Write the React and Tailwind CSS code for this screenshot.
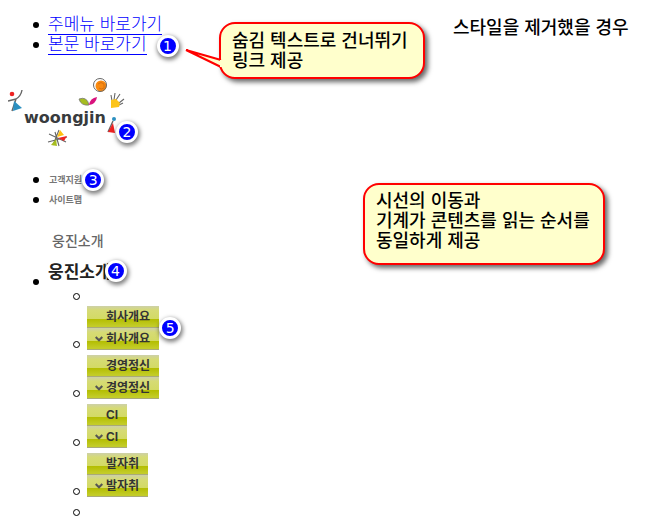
const KR = "font-['Liberation_Sans','Noto_Sans_CJK_KR',sans-serif]";

const menu = [
  { label: "회사개요", badge: "5" },
  { label: "경영정신" },
  { label: "CI" },
  { label: "발자취" },
];

function Badge({ children, className }) {
  return (
    <span
      className={`absolute flex size-[22px] items-center justify-center rounded-full border-[3px] border-white bg-[#0000ff] font-['DejaVu_Sans',sans-serif] text-sm leading-none font-normal text-white shadow-[1px_2px_4px_1px_rgba(0,0,0,0.5)] ${className}`}
    >
      {children}
    </span>
  );
}

function Disc() {
  return <span className="block size-[6px] shrink-0 rounded-full bg-black" />;
}

function Circle() {
  return <span className="block size-[7px] shrink-0 rounded-full border border-black" />;
}

function MenuLink({ label, open }) {
  return (
    <a
      href="#menu"
      className="flex h-[22px] items-center border-b border-[#a9aa78] bg-[linear-gradient(to_bottom,#cdd0a8_0,#d6db75_20%,#d3da65_61%,#b3bd00_62%,#c3cc28_95%)] pt-px pr-[9px] pl-[19px] text-xs font-bold text-[#333]"
    >
      {open && (
        <svg viewBox="0 0 8 6" className="-ml-[11px] mr-[3px] h-[6px] w-[8px]" aria-hidden="true">
          <path d="M.7 1 4 4.3 7.3 1" fill="none" stroke="#555" strokeWidth="2" />
        </svg>
      )}
      {label}
    </a>
  );
}

function Logo() {
  return (
    <svg viewBox="0 0 120 76" className="h-[76px] w-[120px]" role="img" aria-label="woongjin">
      <g fill="none" stroke="#666" strokeWidth="1.4">
        <path d="M0 26l8-2Q13 21 14 15M8 24L4 36" />
        <path d="M104 26l-1-6M106 25l1-7M108 25l4-6M111 28l5-4M111 30l4-2" strokeWidth="1.1" />
        <path d="M41 59l17 8M51 55L45 70M59 62L40 67M47 57l4 14" strokeWidth="1.1" />
        <path d="M105 46L100 57" />
      </g>
      <circle cx="4" cy="19" r="2.3" fill="#e22" />
      <path d="M6 26l8 7-9 3z" fill="#2b8fc0" />
      <path d="M49 62l3-7 4 5z" fill="#fdc010" />
      <path d="M50 63l9-2-3 5z" fill="#e22" />
      <path d="M48 64l-5 6 6 1z" fill="#a6bd20" />
      <path d="M103 25l5-1 4 4-1 4-8 1z" fill="#fcc419" />
      <circle cx="93" cy="11" r="5.5" fill="#f98a10" />
      <circle cx="92" cy="10" r="6.5" fill="none" stroke="#666" />
      <path d="M90 9q3-3 6 0v4q-3 2-5 0" fill="none" stroke="#d87010" />
      <path d="M71 24q8-3 10 6q-8 1-10-6z" fill="#a6bd20" stroke="#777" strokeWidth=".8" />
      <path d="M81 30q1-7 8-8q-1 7-8 8z" fill="#d9127d" />
      <circle cx="106" cy="44" r="2" fill="#2b8fc0" />
      <path d="M105 48l-5 9 7 1z" fill="#e22" />
      <text
        x="16"
        y="48"
        fill="#383b3d"
        className="font-['DejaVu_Sans',sans-serif] text-base font-bold"
      >
        woongjin
      </text>
    </svg>
  );
}

function Callout({ children, className }) {
  return (
    <div
      className={`relative rounded-2xl border-2 border-[#f00] bg-[#ffffcc] shadow-[3px_3px_5px_rgba(0,0,0,0.6)] ${className}`}
    >
      {children}
    </div>
  );
}

export default function App() {
  return (
    <div className={`flex min-h-screen bg-white text-black ${KR}`}>
      <main className="w-[219px] shrink-0 pt-[15px] pl-2">
        <ul className="pl-[25px] text-[17px] leading-5 font-light text-[#0000ff]">
          <li className="flex items-center gap-[9px]">
            <Disc />
            <a href="#menu" className="border-b border-current leading-[19px]">주메뉴 바로가기</a>
          </li>
          <li className="flex items-center gap-[9px]">
            <Disc />
            <span className="relative">
              <a href="#content" className="block border-b border-current leading-[19px]">본문 바로가기</a>
              <Badge className="top-0 left-full ml-[10px]">1</Badge>
            </span>
          </li>
        </ul>

        <div className="relative mt-5 w-[120px]">
          <Logo />
          <Badge className="right-[-10px] bottom-[8px]">2</Badge>
        </div>

        <ul className="mt-[19px] pl-[25px] text-[9px] leading-5 font-bold text-[#777]">
          <li className="flex items-center gap-[10px]">
            <Disc />
            <span className="relative">
              <a href="#support">고객지원</a>
              <Badge className="-top-px left-full">3</Badge>
            </span>
          </li>
          <li className="flex items-center gap-[10px]">
            <Disc />
            <a href="#sitemap">사이트맵</a>
          </li>
        </ul>

        <ul id="menu" className="mt-5 pl-[25px]">
          <li>
            <div className="flex items-end gap-[9px]">
              <span className="pb-[1px]"><Disc /></span>
              <div>
                <a href="#about" className="block pl-1 text-sm leading-[22px] font-medium text-[#666]">웅진소개</a>
                <a href="#about" className="relative mt-2 block text-[17px] leading-[26px] font-bold text-[#222]">
                  웅진소개
                  <Badge className="top-0 right-[-16px]">4</Badge>
                </a>
              </div>
            </div>
            <ul className="pl-10">
              <li className="flex h-5 items-center"><Circle /></li>
              {menu.map(({ label, badge }) => (
                <li key={label} className="mb-[5px] flex items-end gap-[7px]">
                  <span className="pb-[2px]"><Circle /></span>
                  <div className="relative">
                    <MenuLink label={label} />
                    <MenuLink label={label} open />
                    {badge && <Badge className="top-[11px] left-full">{badge}</Badge>}
                  </div>
                </li>
              ))}
              <li className="flex h-5 items-center"><Circle /></li>
            </ul>
          </li>
        </ul>
      </main>

      <aside className="flex-1 pt-[18px] text-lg leading-5 font-medium">
        <div className="flex items-start gap-7">
          <Callout className="mt-1 w-[206px] pt-[7px] pb-[6px] pl-[11px] whitespace-nowrap">
            <svg viewBox="0 0 40 26" className="absolute top-[24px] left-[-36px] h-[26px] w-[40px]" aria-hidden="true">
              <path d="M36 12 1 2 36 19" fill="#ffffcc" stroke="#f00" strokeWidth="2" />
              <path d="M35 12h4v7h-4z" fill="#ffffcc" />
            </svg>
            숨김 텍스트로 건너뛰기
            <br />
            링크 제공
          </Callout>
          <h1 className="whitespace-nowrap">스타일을 제거했을 경우</h1>
        </div>
        <Callout className="mt-[104px] ml-36 w-[242px] pt-[6px] pb-3 pl-[11px] whitespace-nowrap">
          시선의 이동과
          <br />
          기계가 콘텐츠를 읽는 순서를
          <br />
          동일하게 제공
        </Callout>
      </aside>
    </div>
  );
}
